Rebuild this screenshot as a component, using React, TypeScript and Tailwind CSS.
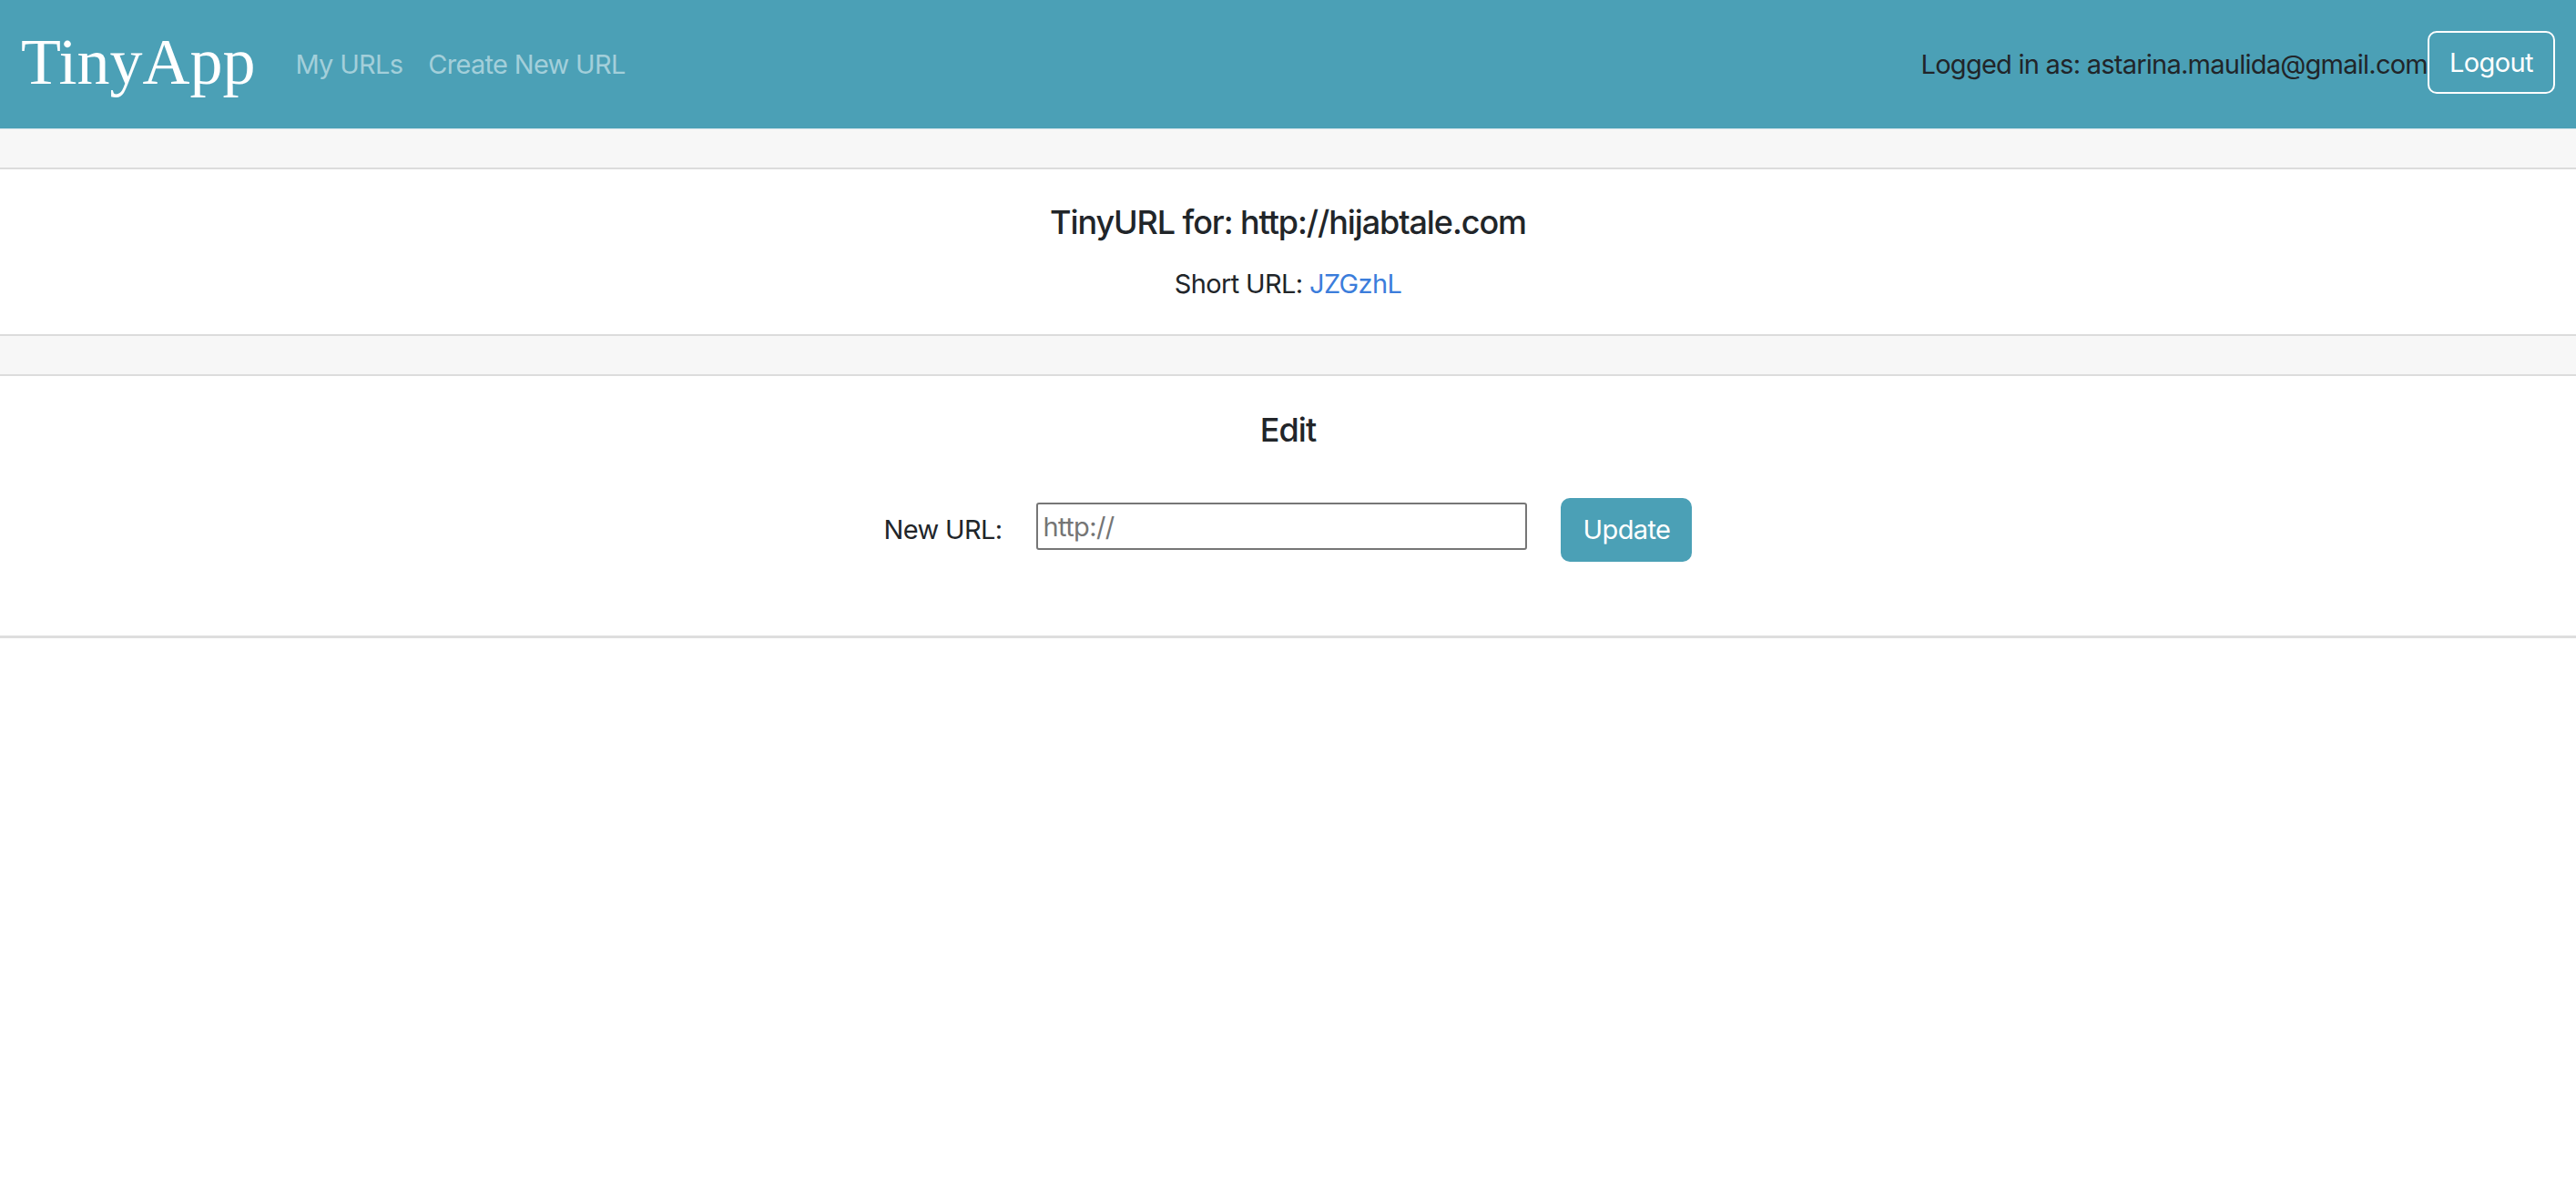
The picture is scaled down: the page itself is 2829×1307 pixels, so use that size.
import React from "react";

const sans = { fontFamily: "Inter, 'Liberation Sans', sans-serif" };

export default function App() {
  return (
    <div className="min-h-screen bg-white text-[#212529]" style={sans}>
      <nav className="flex h-[141px] items-center justify-between bg-[#4ba0b6] pl-[23px] pr-[23px]">
        <div className="flex items-center">
          <span
            className="mb-[6px] mr-[30px] text-[72px] leading-none text-white"
            style={{ fontFamily: "'Liberation Serif', 'Times New Roman', serif" }}
          >
            TinyApp
          </span>
          <a className="px-[14px] text-[29px] tracking-[-0.7px] text-[#a3cfda]">My URLs</a>
          <a className="px-[14px] text-[29px] tracking-[-0.7px] text-[#a3cfda]">Create New URL</a>
        </div>
        <div className="flex items-center">
          <span className="text-[29px] tracking-[-0.75px] text-[#212529]">Logged in as: astarina.maulida@gmail.com</span>
          <button className="mb-[4px] flex h-[69px] w-[140px] items-center justify-center rounded-[10px] border-2 border-white text-[29px] tracking-[-0.6px] text-white">
            Logout
          </button>
        </div>
      </nav>

      <section>
        <div className="h-[45px] border-t border-b-2 border-t-[#d3e4ea] border-b-[#dcdcdc] bg-[#f7f7f7]" />
        <div className="flex h-[181px] flex-col items-center pt-[37px]">
          <h5 className="text-[36px] font-medium leading-[43px] tracking-[-1.1px]">TinyURL for: http://hijabtale.com</h5>
          <p className="mt-[24px] text-[29px] leading-[43px] tracking-[-0.65px]">
            Short URL: <a className="text-[#3b7ddb]">JZGzhL</a>
          </p>
        </div>
      </section>

      <section className="border-b-[3px] border-[#dedede]">
        <div className="h-[46px] border-t-2 border-b-2 border-[#dcdcdc] bg-[#f7f7f7]" />
        <div className="flex h-[285px] flex-col items-center pt-[38px]">
          <h5 className="text-[36px] font-medium leading-[43px] tracking-[-1px]">Edit</h5>
          <form className="mt-[53px] flex items-start">
            <label className="mt-[13px] text-[29px] leading-[43px] tracking-[-0.65px]">New URL:</label>
            <input
              className="ml-[38px] mt-[5px] h-[52px] w-[539px] rounded-[3px] border-2 border-[#767676] pl-[5px] text-[29px] tracking-[-0.6px] placeholder:text-[#757575] outline-none"
              placeholder="http://"
            />
            <button
              type="button"
              className="ml-[37px] flex h-[70px] w-[144px] items-center justify-center rounded-[10px] bg-[#4ba0b6] text-[29px] tracking-[-0.6px] text-white"
            >
              Update
            </button>
          </form>
        </div>
      </section>
    </div>
  );
}
